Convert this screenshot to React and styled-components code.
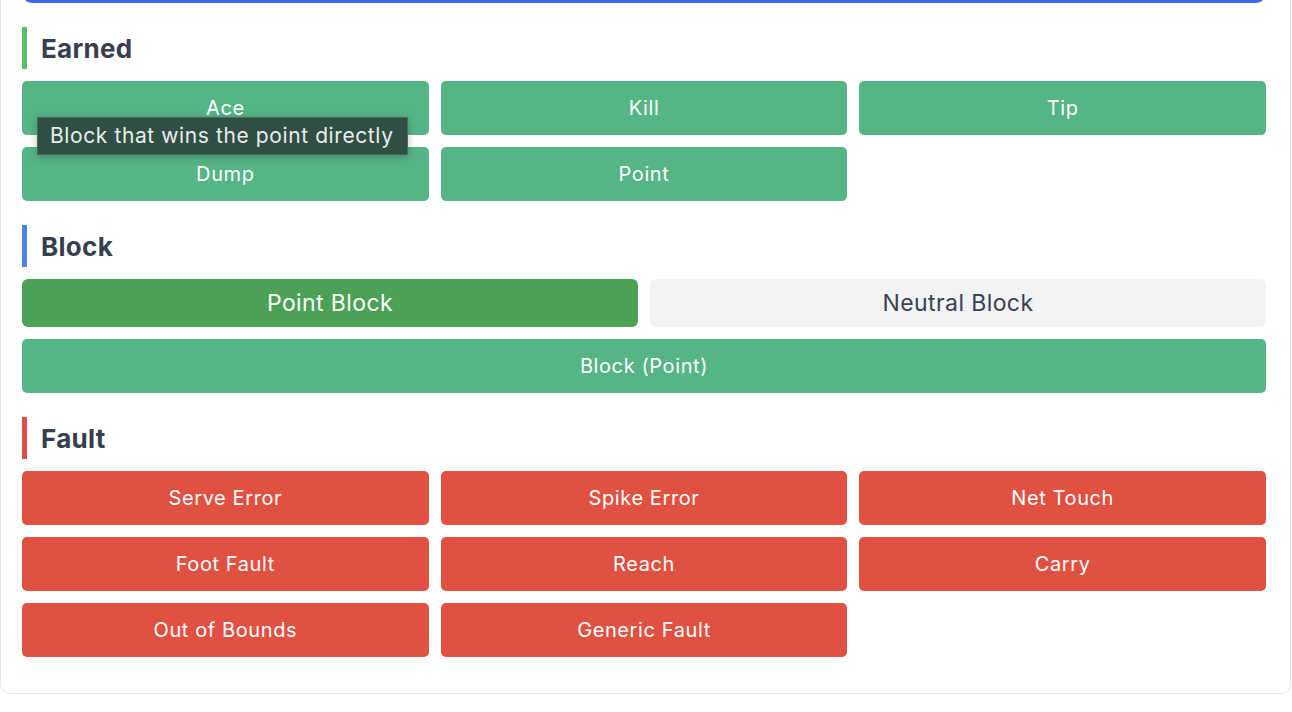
import React from 'react';
import styled, { createGlobalStyle } from 'styled-components';

const earned = ['Ace', 'Kill', 'Tip', 'Dump', 'Point'];
const faults = ['Serve Error', 'Spike Error', 'Net Touch', 'Foot Fault', 'Reach', 'Carry', 'Out of Bounds', 'Generic Fault'];

export default function App() {
  return (
    <>
      <GlobalStyle />
      <Card>
        <SelectedBox />
        <Section>
          <Heading $accent="#5cc062">Earned</Heading>
          <Grid $cols={3}>
            {earned.map((label, index) => (
              <ActionWrap key={label}>
                <ActionButton $tone="green">{label}</ActionButton>
                {index === 0 && <Tooltip>Block that wins the point directly</Tooltip>}
              </ActionWrap>
            ))}
          </Grid>
        </Section>
        <Section>
          <Heading $accent="#4b82ee">Block</Heading>
          <Grid $cols={2}>
            <ToggleButton $active>Point Block</ToggleButton>
            <ToggleButton>Neutral Block</ToggleButton>
          </Grid>
          <Grid $cols={1}>
            <ActionButton $tone="green">Block (Point)</ActionButton>
          </Grid>
        </Section>
        <Section>
          <Heading $accent="#dd4c45">Fault</Heading>
          <Grid $cols={3}>
            {faults.map((label) => (
              <ActionButton key={label} $tone="red">{label}</ActionButton>
            ))}
          </Grid>
        </Section>
      </Card>
    </>
  );
}

const GlobalStyle = createGlobalStyle`
  body {
    margin: 0;
    background: #ffffff;
    font-family: Inter, "Noto Sans", "Liberation Sans", sans-serif;
    overflow: hidden;
  }
`;

const Card = styled.div`
  width: 1291px;
  box-sizing: border-box;
  margin-top: -66px;
  padding: 36px 24px 22px 21px;
  background: #fff;
  border: 1px solid #e2e3e8;
  border-radius: 10px;
`;

const SelectedBox = styled.div`
  height: 26px;
  border: 3px solid #3a66e2;
  border-radius: 10px;
  margin-bottom: 24px;
`;

const Section = styled.section`
  display: flex;
  flex-direction: column;
  gap: 12px;
  margin-bottom: 24px;
  &:last-child {
    margin-bottom: 14px;
  }
`;

const Heading = styled.h2`
  margin: 0;
  height: 42px;
  display: flex;
  align-items: center;
  border-left: 5px solid ${(p) => p.$accent};
  padding-left: 14px;
  font-size: 26px;
  font-weight: 700;
  letter-spacing: 0.3px;
  color: #363e4f;
`;

const Grid = styled.div`
  display: grid;
  grid-template-columns: repeat(${(p) => p.$cols}, 1fr);
  gap: 12px;
`;

const ActionWrap = styled.div`
  position: relative;
  display: flex;
`;

const ActionButton = styled.button`
  flex: 1;
  height: 54px;
  border: none;
  border-radius: 5px;
  background: ${(p) => (p.$tone === 'red' ? '#e05142' : '#55b584')};
  color: #fff;
  font-family: inherit;
  font-size: 20px;
  font-weight: 400;
  letter-spacing: 0.6px;
`;

const ToggleButton = styled.button`
  height: 48px;
  border: none;
  border-radius: 6px;
  background: ${(p) => (p.$active ? '#4ca254' : '#f2f3f5')};
  color: ${(p) => (p.$active ? '#fff' : '#3a4152')};
  font-family: inherit;
  font-size: 23px;
  letter-spacing: 0.4px;
`;

const Tooltip = styled.div`
  position: absolute;
  left: 15px;
  top: 36px;
  z-index: 5;
  padding: 5px 13px 6px 12px;
  background: #2f4f44;
  border: 1px solid #4a6a5e;
  color: #ececec;
  font-size: 21px;
  letter-spacing: 0.6px;
  white-space: nowrap;
  box-shadow: 0 2px 8px rgba(0, 0, 0, 0.25);
`;
